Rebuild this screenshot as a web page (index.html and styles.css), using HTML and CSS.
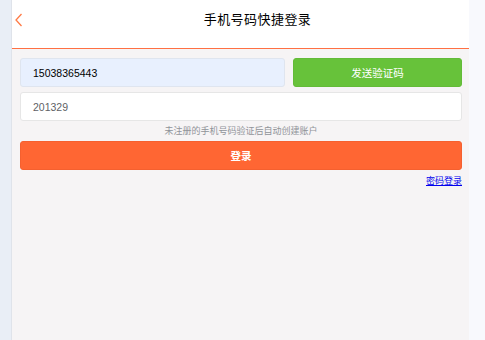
FILE: index.html
```html
<!DOCTYPE html>
<html lang="zh">
<head>
  <meta charset="UTF-8">
  <meta name="viewport" content="width=device-width, initial-scale=1.0">
  <title>手机号码快捷登录</title>
  <link rel="stylesheet" href="styles.css">
</head>
<body>
  <div class="side-left"></div>
  <div class="page">
    <div class="header">
      <span class="back">
        <svg width="8" height="14" viewBox="0 0 8 14"><polyline points="6.5,1 1,7 6.5,13" fill="none" stroke="#ff7a45" stroke-width="1.3"/></svg>
      </span>
      <h1>手机号码快捷登录</h1>
    </div>
    <div class="form">
      <div class="row">
        <div class="input phone">15038365443</div>
        <button class="send">发送验证码</button>
      </div>
      <div class="input code">201329</div>
      <div class="hint">未注册的手机号码验证后自动创建账户</div>
      <button class="login">登录</button>
      <div class="links"><a href="#">密码登录</a></div>
    </div>
  </div>
  <div class="side-right"></div>
</body>
</html>
```
FILE: styles.css
```css
body {
  margin: 0;
  height: 340px;
  display: flex;
  font-family: "Liberation Sans", "Noto Sans CJK SC", sans-serif;
  background-color: #f8f9fd;
  overflow: hidden;
}
.side-left {
  width: 11px;
  background-color: #e9eef6;
  border-right: 1px solid #dfe3ea;
}
.side-right {
  width: 16px;
  background-color: #f8f9fd;
}
.page {
  flex: 1;
  background-color: #f6f4f5;
}
.header {
  height: 48px;
  background-color: #fff;
  border-bottom: 1px solid #ff7043;
  display: flex;
  align-items: flex-start;
}
.back {
  width: 40px;
  height: 40px;
  display: flex;
  align-items: center;
  padding-left: 3px;
  box-sizing: border-box;
}
.header h1 {
  flex: 1;
  margin: 0;
  padding-right: 6px;
  line-height: 40px;
  text-align: center;
  font-size: 13px;
  letter-spacing: 0.45px;
  font-weight: normal;
  color: #000;
}
.form {
  padding: 9px 7px 0 8px;
}
.row {
  display: flex;
  gap: 8px;
}
.input {
  height: 29px;
  box-sizing: border-box;
  border-radius: 3px;
  padding-left: 12px;
  display: flex;
  align-items: center;
  font-size: 10.5px;
}
.phone {
  flex: 1;
  background-color: #e8f0fe;
  border: 1px solid #dfe5ef;
  color: #000;
}
.code {
  margin-top: 5px;
  background-color: #fff;
  border: 1px solid #e6e6e6;
  color: #606266;
}
button {
  font-family: inherit;
  border: none;
  border-radius: 3px;
  color: #fff;
  height: 29px;
  cursor: pointer;
}
.send {
  width: 169px;
  background-color: #67c23a;
  border: 1px solid #63bb38;
  font-size: 10.5px;
}
.hint {
  margin-top: 2px;
  height: 16px;
  line-height: 16px;
  text-align: center;
  font-size: 9px;
  color: #909399;
}
.login {
  display: block;
  width: 100%;
  margin-top: 2px;
  background-color: #ff6633;
  border: 1px solid #f5602f;
  font-size: 10.5px;
  font-weight: bold;
}
.links {
  text-align: right;
  margin-top: 4px;
  font-size: 9px;
}
.links a {
  color: #0000ee;
}
```
